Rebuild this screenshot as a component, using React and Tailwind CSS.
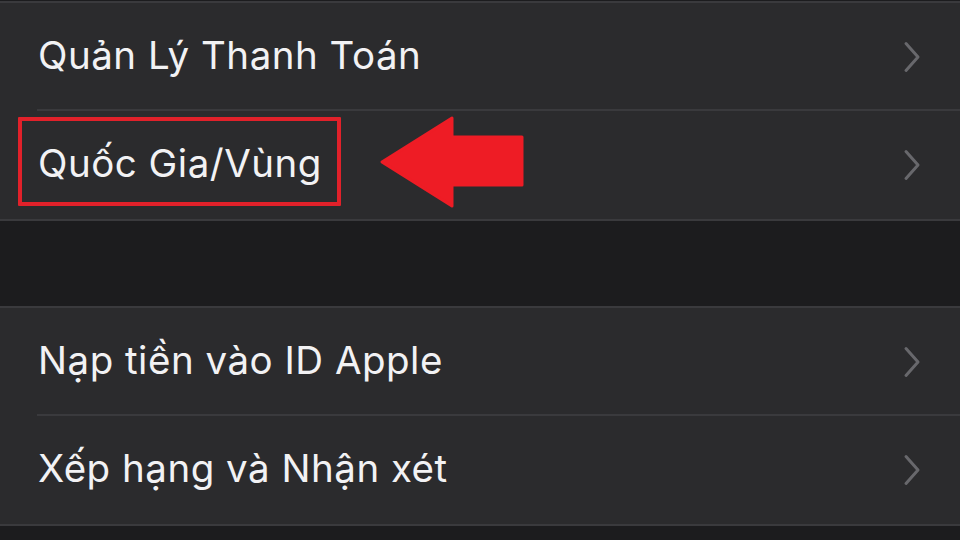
import React from "react";

const Chevron = () => (
  <svg width="18" height="32" viewBox="0 0 18 32" fill="none" className="shrink-0">
    <path d="M3 2.5 L15 16 L3 29.5" stroke="#68686c" strokeWidth="3" strokeLinecap="round" strokeLinejoin="round" />
  </svg>
);

const Row = ({ label, children, divider }) => (
  <div className="relative h-[108px] flex items-center pl-[38px] pr-[39px]">
    <span className="flex-1 text-[38.5px] text-[#f2f2f4] tracking-[0.5px] pb-[2px]" style={{ fontFamily: "Inter, 'Noto Sans', sans-serif" }}>
      {label}
    </span>
    <Chevron />
    {children}
    {divider && <div className="absolute bottom-0 left-[37px] right-0 h-[2px] bg-[#3a3a3d]" />}
  </div>
);

const Section = ({ children }) => (
  <div className="bg-[#2b2b2d] border-y-2 border-[#3a3a3d]">{children}</div>
);

export default function App() {
  return (
    <div className="w-[960px] h-[540px] overflow-hidden bg-[#1c1c1e] flex flex-col pt-[1px]">
      <Section>
        <Row label="Quản Lý Thanh Toán" divider />
        <Row label="Quốc Gia/Vùng">
          {/* highlight box */}
          <div className="absolute left-[18px] top-[6px] w-[323px] h-[89px] border-[4px] border-[#e1212a] rounded-[1px]" />
          {/* pointer arrow */}
          <svg className="absolute left-[379px] top-[4px]" width="146" height="94" viewBox="0 0 146 94">
            <path d="M3 47 L73 3 L73 22 L143 22 L143 70 L73 70 L73 91 Z" fill="#ee1c25" stroke="#ee1c25" strokeWidth="3" strokeLinejoin="round" />
          </svg>
        </Row>
      </Section>
      <div className="h-[85px] shrink-0" />
      <Section>
        <Row label="Nạp tiền vào ID Apple" divider />
        <Row label="Xếp hạng và Nhận xét" />
      </Section>
    </div>
  );
}
